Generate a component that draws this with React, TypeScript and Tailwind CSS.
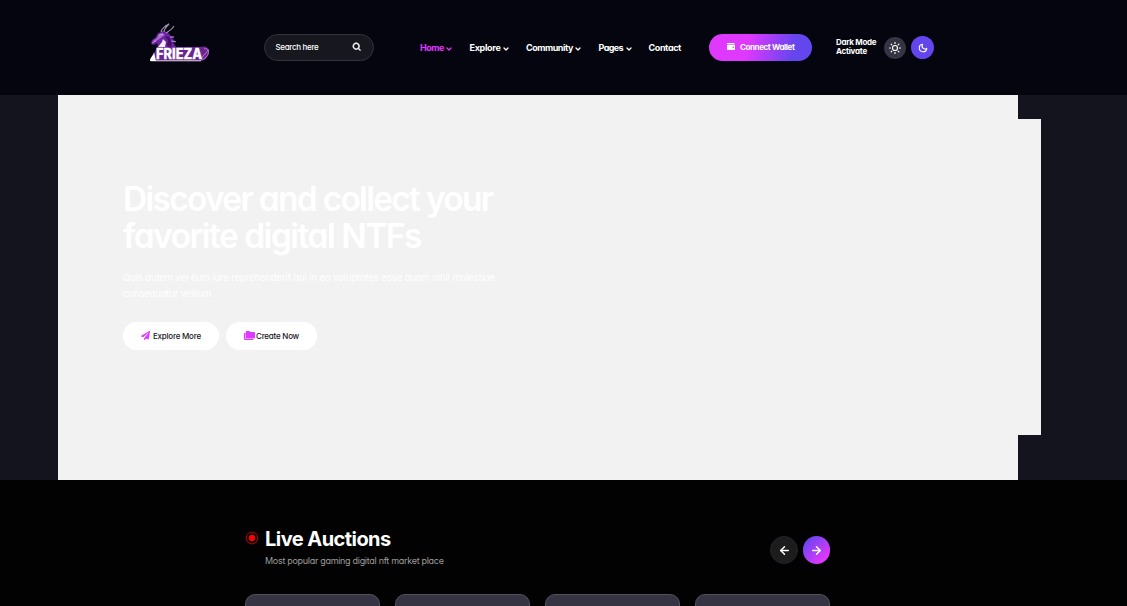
import { ReactNode } from "react";
import { FaPaperPlane } from "react-icons/fa";
import { BiSearch } from "react-icons/bi";
import { FiArrowLeft, FiArrowRight, FiChevronDown, FiMoon, FiSun } from "react-icons/fi";

function Logo() {
  return (
    <svg className="ml-[149px] h-[40px] w-[62px] shrink-0" viewBox="0 0 62 40" aria-label="Frieza">
      <path d="M2 21 3 17l4-3 2-4 5-2 4 1 4 4 4 1-3 1 4 4-3 0 3 5H9l-1-4-3 2Z" fill="#6b22a0" />
      <path d="M4 18l4-3 1-3 4-2 3 2-3 2-4 3-4 2Z" fill="#a56bcb" />
      <path d="M9 24l4-5 1-3 3 3-1 5Z" fill="#f4ecf8" />
      <path d="M16 13l3 4-1 6 4 1 1-5-3-5Z" fill="#431069" />
      <path d="M12 9c1-4 4-6 8-8-3 3-5 5-5 8M17 10c3-2 6-3 8-7" fill="none" stroke="#9f93ac" strokeWidth="1.1" />
      <path d="M21 14l4 0M22 18l5 1M3 20l4-2M10 12l4-1" fill="none" stroke="#d6c2e4" strokeWidth="0.7" />
      <path d="M2 38c2-4 3-8 6-14h43c4-1 8-1 9 4 0 5-3 9-8 10Z" fill="#6c2492" />
      <path d="M1 38c0-4 4-6 4-9l2 9Z" fill="#fff" />
      <path d="M55 26c3-2 5 2 2 4s-3 4-5 6M59 26c2 5-2 9-6 11" fill="none" stroke="#c18bd6" strokeWidth="0.8" />
      <text x="7" y="35.8" textLength="46" lengthAdjust="spacingAndGlyphs" fill="#fff" stroke="#fff" strokeWidth="0.3" fontFamily="Inter, sans-serif" fontSize="14" fontWeight="800">FRIEZA</text>
      <path d="M2 37.8h50" stroke="#fff" strokeWidth="0.8" />
    </svg>
  );
}

function WalletIcon() {
  return (
    <svg className="-mt-[3px] ml-px h-[7px] w-[8px] shrink-0" viewBox="0 0 8 7">
      <path d="M0 0h7.5v1.2H0Z" fill="#fff" />
      <path fillRule="evenodd" d="M0 1.8h8V6.4q0 .6-.6.6H.6Q0 7 0 6.4ZM5.6 3.8v1.1h1.2V3.8Z" fill="#fff" />
    </svg>
  );
}

function NavItem({ children, className, menu = true }: { children: ReactNode; className: string; menu?: boolean }) {
  return (
    <a className={`flex shrink-0 items-center whitespace-nowrap text-[9px] font-bold leading-3 ${className}`}>
      <span>{children}</span>
      {menu && <FiChevronDown className="-mr-px ml-auto mt-[2px] size-[8px]" strokeWidth={4} />}
    </a>
  );
}

export default function App() {
  return (
    <div className="h-[606px] w-[1127px] overflow-hidden bg-[#020202] font-['Inter',sans-serif] text-white [font-feature-settings:'cv11']">
      <header className="flex h-[95px] items-center bg-[#04050e]">
        <div className="-mt-[9px] flex shrink-0">
          <Logo />
        </div>
        <div className="ml-[53px] flex h-[27px] w-[110px] shrink-0 items-center justify-between rounded-full border border-[#33343b] bg-[#16171f] pl-[10.5px] pr-[11px]">
          <span className="-mt-px text-[8px] font-medium tracking-[-0.32px]">Search here</span>
          <BiSearch className="-mt-px size-[10px]" stroke="currentColor" strokeWidth={1.5} />
        </div>
        <nav className="flex shrink-0 pt-px">
          <NavItem className="ml-[46px] w-[32px] tracking-[-0.45px] text-[#e038ff]">Home</NavItem>
          <NavItem className="ml-[17.5px] w-[39px] tracking-[-0.3px]">Explore</NavItem>
          <NavItem className="ml-[17.5px] w-[55px] tracking-[-0.47px]">Community</NavItem>
          <NavItem className="ml-[17.5px] w-[33px] tracking-[-0.6px]">Pages</NavItem>
          <NavItem className="ml-[17px] w-[33px] tracking-[-0.4px]" menu={false}>Contact</NavItem>
        </nav>
        <button className="ml-[27.5px] flex h-[27px] w-[103px] shrink-0 items-center rounded-full bg-[linear-gradient(100deg,#df38ff_0%,#df38ff_38%,#6346ee_82%)] pl-[17px]">
          <WalletIcon />
          <span className="-mt-px ml-[5px] whitespace-nowrap text-[8px] font-bold tracking-[-0.4px]">Connect Wallet</span>
        </button>
        <div className="-mt-[2px] ml-[24px] w-[48px] shrink-0 text-[8px] font-bold leading-[9px]">
          <div className="tracking-[-0.3px]">Dark Mode</div>
          <div className="tracking-[-0.25px]">Activate</div>
        </div>
        <button className="flex size-[22px] shrink-0 items-center justify-center rounded-full bg-[#353443]">
          <FiSun className="size-[12px]" strokeWidth={2.3} />
        </button>
        <button className="ml-[5px] flex size-[23px] shrink-0 items-center justify-center rounded-full bg-[#6346ee]">
          <FiMoon className="size-[10px]" strokeWidth={2.6} />
        </button>
      </header>

      <main>
        <section className="flex h-[385px] bg-[#14141e] pl-[58px]">
          <div className="w-[960px] bg-[#f2f2f2] pl-[65px] pt-[86px]">
            <h1 className="whitespace-nowrap text-[33.5px] font-semibold leading-[37px]">
              <span className="block tracking-[-1.72px]">Discover and collect your</span>
              <span className="block tracking-[-1.5px]">favorite digital NTFs</span>
            </h1>
            <p className="mt-[15px] text-[9.5px] leading-4">
              <span className="block tracking-[-0.12px]">Quis autem vel eum iure reprehenderit qui in ea voluptates esse quam nihil molestiae</span>
              <span className="block tracking-[-0.15px]">consequatur veillum</span>
            </p>
            <div className="mt-[20px] flex gap-[7px] text-[8px] font-medium text-[#17171f]">
              <button className="flex h-[28px] w-[96px] items-center rounded-full bg-white pl-[18px]">
                <FaPaperPlane className="-mt-[2px] size-[9px] shrink-0 text-[#df38ff]" />
                <span className="-mt-px ml-[3px] whitespace-nowrap tracking-[-0.23px]">Explore More</span>
              </button>
              <button className="flex h-[28px] w-[91px] items-center rounded-full bg-white pl-[18px]">
                <svg className="-mt-[2px] h-[9px] w-[11px] shrink-0" viewBox="0 0 11 9" fill="#df38ff">
                  <path d="M1.7 1q0-1 1-1h2.6l1 1H10q1 0 1 1v4.4q0 1-1 1H2.7q-1 0-1-1Z" />
                  <path d="M0 2h1.3v5.3q0 .6.7.6h7.3V9H1Q0 9 0 8Z" />
                </svg>
                <span className="-mt-px ml-[1px] whitespace-nowrap tracking-[-0.23px]">Create Now</span>
              </button>
            </div>
          </div>
          <div className="mt-[24px] h-[316px] w-[23px] bg-[#f2f2f2]" />
        </section>

        <section className="w-[830px] pl-[245px] pt-[47px]">
          <div className="flex h-[67px]">
            <svg className="mt-[4px] size-[14px] shrink-0" viewBox="0 0 14 14">
              <circle cx="7" cy="7" r="5.9" fill="none" stroke="#c30000" />
              <circle cx="7" cy="7" r="3.2" fill="#ff0000" />
            </svg>
            <div className="ml-[6px] whitespace-nowrap">
              <h2 className="text-[20px] font-bold leading-6 tracking-[-0.55px]">Live Auctions</h2>
              <p className="mt-[4px] text-[9px] leading-3 tracking-[-0.3px] text-[#9c9c9c]">Most popular gaming digital nft market place</p>
            </div>
            <div className="ml-auto mt-[9px] flex gap-[5px]">
              <button className="flex size-[28px] items-center justify-center rounded-full border border-[#252331] bg-[#1c1c1c]">
                <FiArrowLeft className="size-[13px]" strokeWidth={2.7} />
              </button>
              <button className="flex h-[28px] w-[27px] items-center justify-center rounded-full bg-[linear-gradient(135deg,#6346ee_10%,#df38ff_80%)]">
                <FiArrowRight className="size-[13px]" strokeWidth={2.7} />
              </button>
            </div>
          </div>
          <div className="grid grid-cols-4 gap-[15px]">
            {[0, 1, 2, 3].map((card) => (
              <div key={card} className="h-[180px] rounded-[10px] border border-[#53515f] bg-[#353443]" />
            ))}
          </div>
        </section>
      </main>
    </div>
  );
}
